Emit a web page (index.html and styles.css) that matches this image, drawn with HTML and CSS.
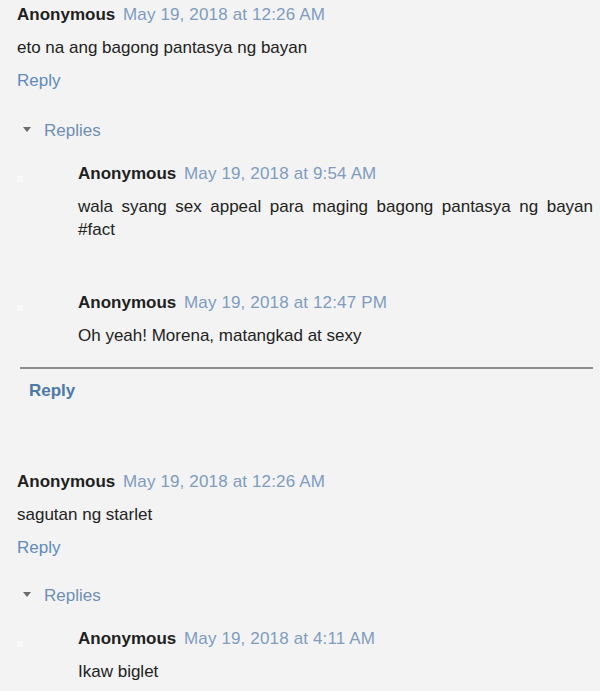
FILE: index.html
```html
<!DOCTYPE html>
<html>
<head>
<meta charset="utf-8">
<link rel="stylesheet" href="styles.css">
</head>
<body>
<div class="thread">
  <div class="comment">
    <div class="head"><span class="name">Anonymous</span> <span class="date">May 19, 2018 at 12:26 AM</span></div>
    <div class="text">eto na ang bagong pantasya ng bayan</div>
    <div class="reply-link">Reply</div>
    <div class="replies-toggle"><span class="tri"></span><span class="replies-label">Replies</span></div>
    <div class="nested">
      <div class="sub">
        <span class="avatar"></span>
        <div class="sub-body">
          <div class="head"><span class="name">Anonymous</span> <span class="date">May 19, 2018 at 9:54 AM</span></div>
          <div class="text">wala syang sex appeal para maging bagong pantasya ng bayan #fact</div>
        </div>
      </div>
      <div class="sub sub-next">
        <span class="avatar"></span>
        <div class="sub-body">
          <div class="head"><span class="name">Anonymous</span> <span class="date">May 19, 2018 at 12:47 PM</span></div>
          <div class="text">Oh yeah! Morena, matangkad at sexy</div>
        </div>
      </div>
      <div class="divider"></div>
      <div class="reply-bold">Reply</div>
    </div>
  </div>

  <div class="comment comment-next">
    <div class="head"><span class="name">Anonymous</span> <span class="date">May 19, 2018 at 12:26 AM</span></div>
    <div class="text">sagutan ng starlet</div>
    <div class="reply-link">Reply</div>
    <div class="replies-toggle short"><span class="tri"></span><span class="replies-label">Replies</span></div>
    <div class="nested">
      <div class="sub">
        <span class="avatar"></span>
        <div class="sub-body">
          <div class="head"><span class="name">Anonymous</span> <span class="date">May 19, 2018 at 4:11 AM</span></div>
          <div class="text">Ikaw biglet</div>
        </div>
      </div>
    </div>
  </div>
</div>
</body>
</html>
```

FILE: styles.css
```css
html, body {
  margin: 0;
  padding: 0;
  background: #f3f3f3;
}
body {
  font-family: "Liberation Sans", Arial, sans-serif;
  font-size: 17px;
  line-height: 23px;
  color: #222;
  overflow: hidden;
}
.thread {
  padding: 3px 7px 0 17px;
}
.head {
  white-space: nowrap;
}
.name {
  font-weight: bold;
  color: #1f1f1f;
}
.date {
  color: #7f9cbf;
  margin-left: 3px;
  letter-spacing: 0.15px;
}
.text {
  margin-top: 10px;
  text-align: justify;
  color: #222;
}
.reply-link {
  margin-top: 10px;
  color: #5f8bbd;
}
.replies-toggle {
  margin-top: 27px;
  display: flex;
  align-items: center;
  padding-left: 6px;
}
.replies-toggle.short {
  margin-top: 25px;
}
.tri {
  width: 0;
  height: 0;
  border-left: 4px solid transparent;
  border-right: 4px solid transparent;
  border-top: 5px solid #6b6b6b;
  margin-right: 13px;
  margin-top: -3px;
}
.replies-label {
  color: #6d8fb6;
}
.nested {
  margin-top: 20px;
}
.sub {
  display: flex;
  align-items: flex-start;
}
.sub-next {
  margin-top: 50px;
}
.avatar {
  width: 6px;
  height: 6px;
  background: #f9f9f9;
  margin-top: 14px;
  margin-right: 55px;
  flex: none;
}
.sub-body {
  flex: 1;
}
.divider {
  height: 2px;
  background: #8e8e8e;
  margin: 20px 0 0 3px;
}
.reply-bold {
  margin-top: 10px;
  padding-left: 12px;
  font-weight: bold;
  color: #4d79a8;
}
.comment-next {
  margin-top: 68px;
}
```
